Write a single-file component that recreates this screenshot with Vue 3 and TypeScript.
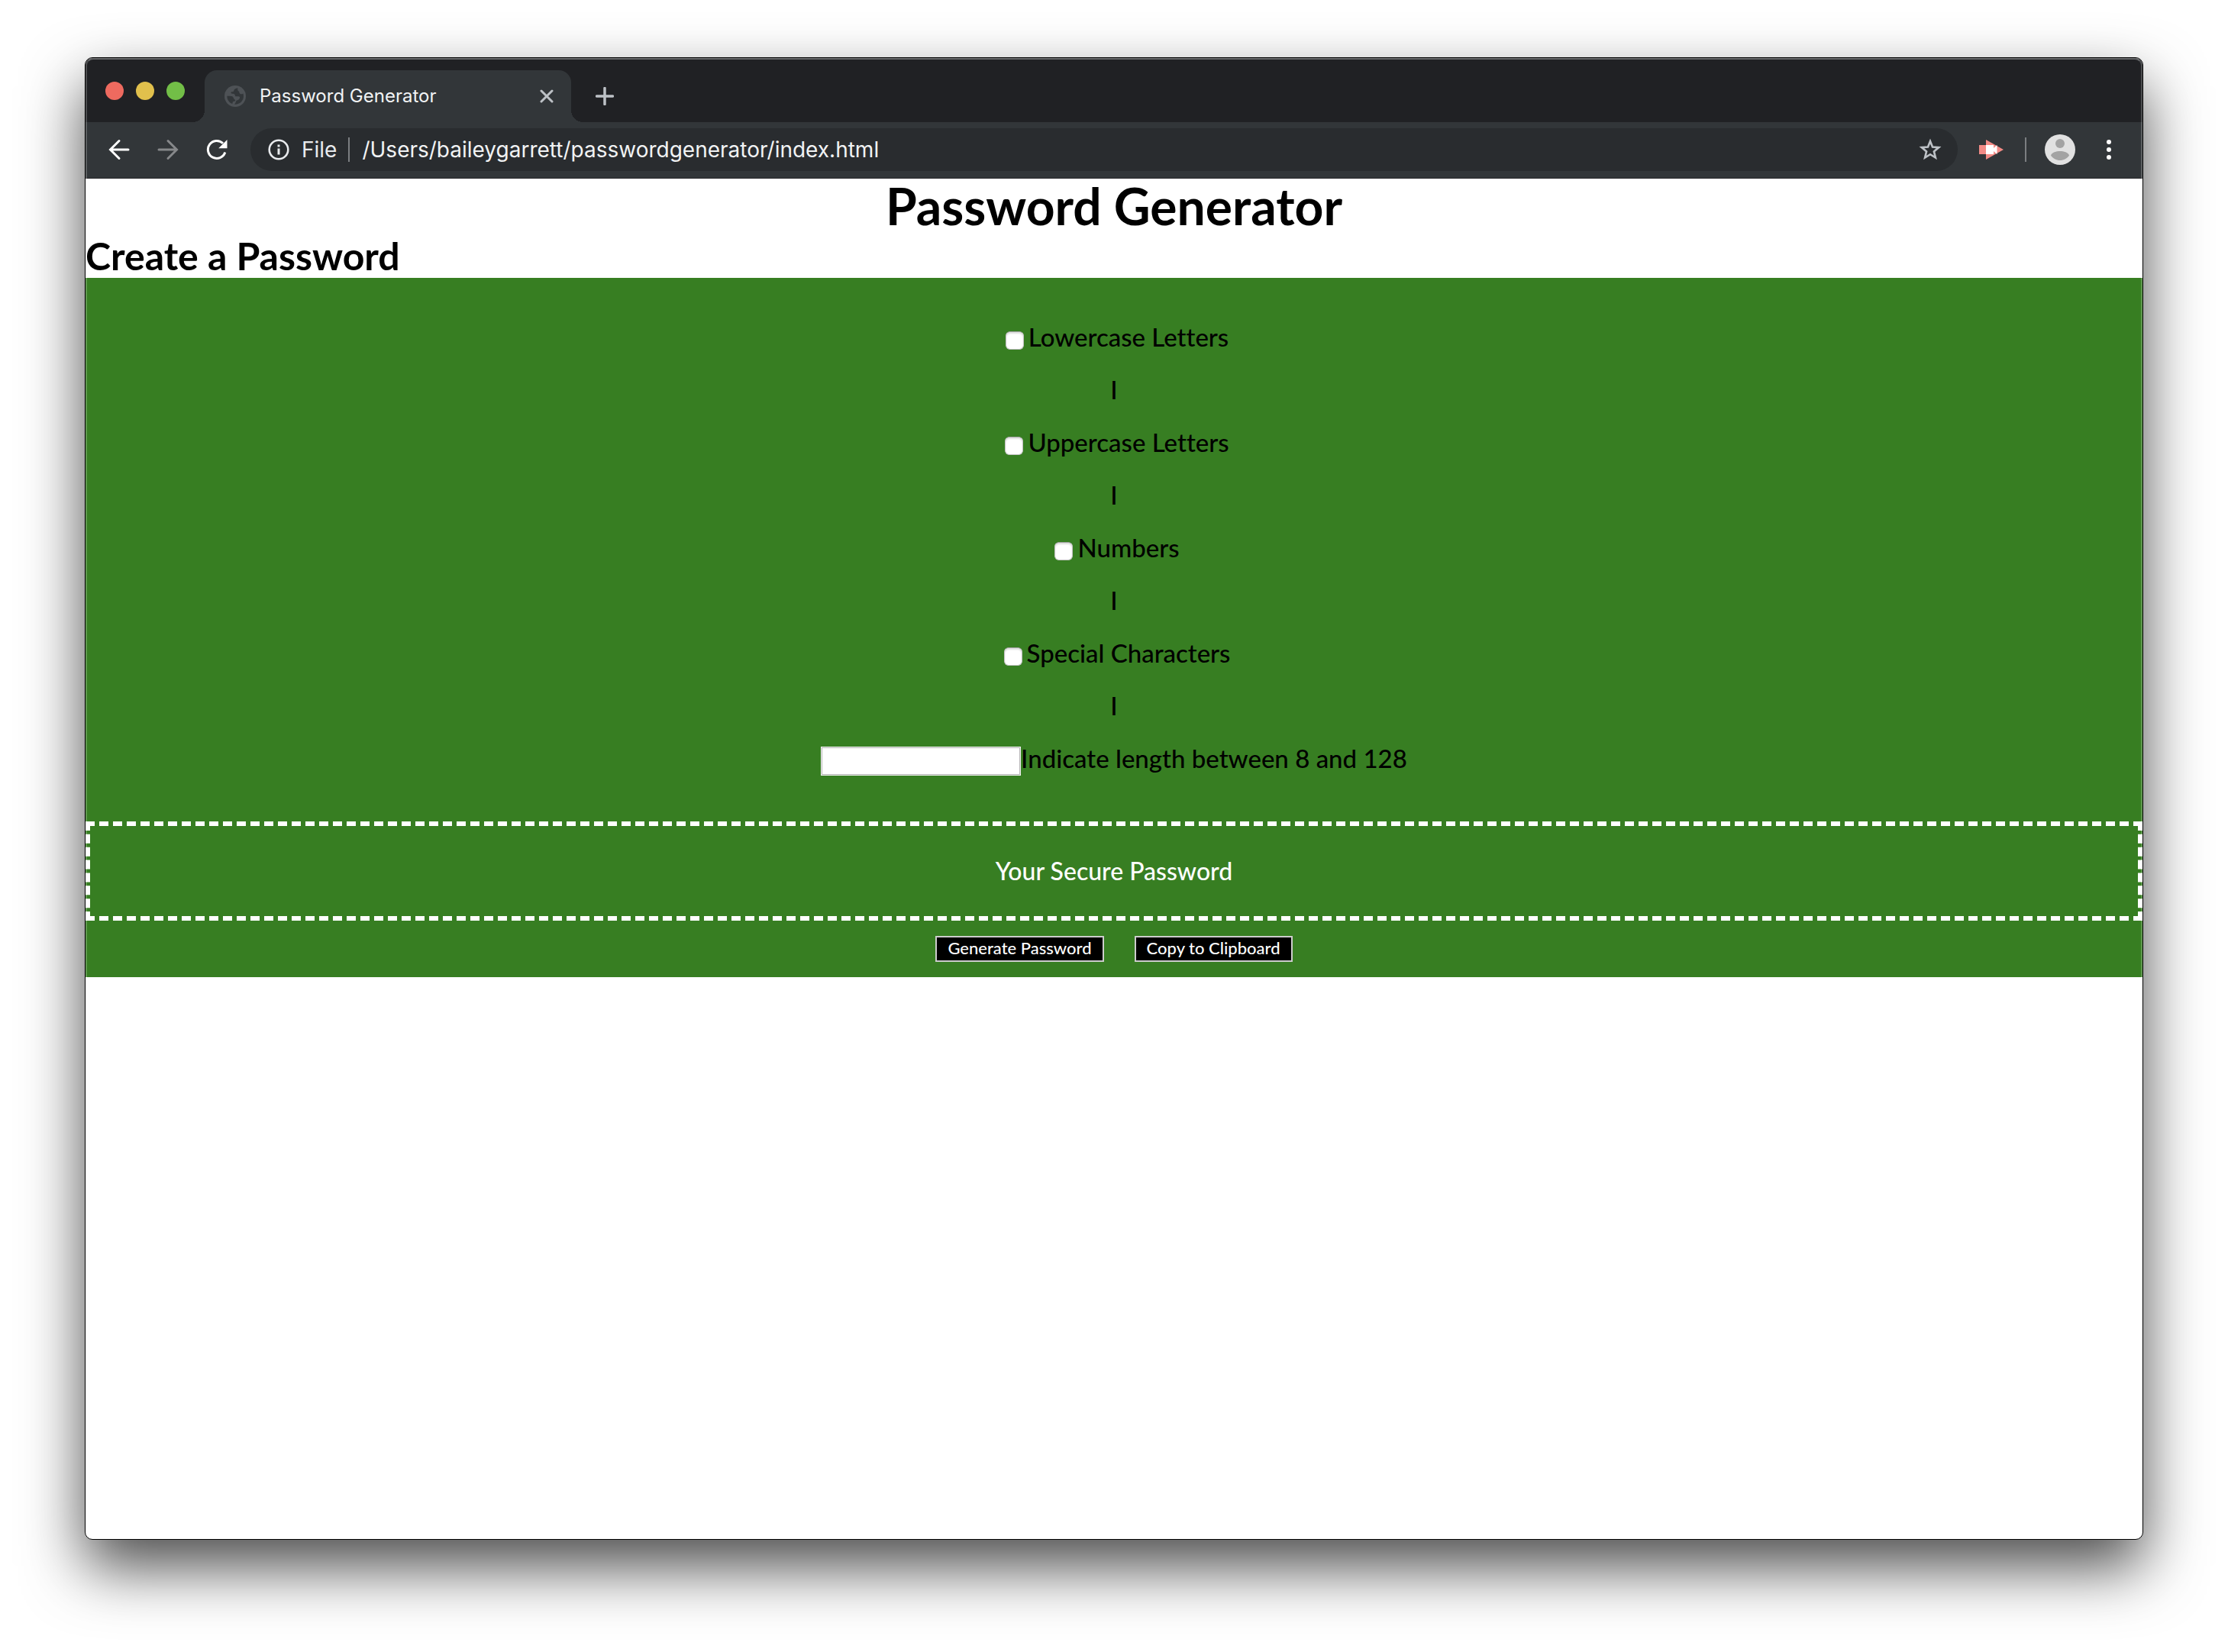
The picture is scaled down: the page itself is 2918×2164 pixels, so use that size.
<script setup lang="ts">
import { reactive, ref } from 'vue'

interface CharacterSet {
  id: string
  label: string
}

const characterSets: CharacterSet[] = [
  { id: 'lowercase', label: 'Lowercase Letters' },
  { id: 'uppercase', label: 'Uppercase Letters' },
  { id: 'numbers', label: 'Numbers' },
  { id: 'special', label: 'Special Characters' },
]

const alphabet: Record<string, string> = {
  lowercase: 'abcdefghijklmnopqrstuvwxyz',
  uppercase: 'ABCDEFGHIJKLMNOPQRSTUVWXYZ',
  numbers: '0123456789',
  special: '!@#$%^&*()-_=+?',
}

const selected = reactive<Record<string, boolean>>({})
const length = ref('')
const password = ref('Your Secure Password')

function generate(): void {
  const pool = characterSets
    .filter((set) => selected[set.id])
    .map((set) => alphabet[set.id])
    .join('')
  const size = Number(length.value)
  if (!pool || size < 8 || size > 128) return
  password.value = Array.from({ length: size }, () => pool[Math.floor(Math.random() * pool.length)]).join('')
}

function copy(): void {
  void navigator.clipboard?.writeText(password.value)
}
</script>

<template>
  <div class="desktop">
    <div class="window">
      <header class="tab-strip">
        <div class="lights">
          <button class="light close" type="button" aria-label="Close window"></button>
          <button class="light minimize" type="button" aria-label="Minimize window"></button>
          <button class="light maximize" type="button" aria-label="Maximize window"></button>
        </div>
        <div class="tab">
          <svg class="globe" viewBox="0 0 28 28" aria-hidden="true">
            <circle cx="14" cy="14" r="14" fill="#4e5256" />
            <path
              d="M17.500 3.200c-.9.400-3 .6-4.300 1.800-1.200 1.100-.6 2.400-1.700 3.100-1 .6-2.700-.1-3 1.200-.3 1.200 1.300 1.400 2.800 1.500 2 .1 2.700 1.700 2.700 3.300 1.700.6 3.700-.4 5.300.5 1.500.9.700 3-.8 4-1.400 1-2.900.6-3.500 2.300-.4 1.300-.9 2.700-2.400 3.700 6.700.7 12.400-4 12.400-10.600 0-1.400-.2-2.500-.6-3.500-1.600 1.300-3.300 1-4.300-.1-1-1.100-.4-2.400-1.500-3-1.100-.5-1.800-1.800-1.100-4.200z"
              fill="#323639"
            />
            <path d="M3.400 13.800c2.400.1 5.600-.3 7.200.8 1.400 1 1.300 3.300 3 4 .9.400.9 1.500-.2 1.800-1.700.4-2.600.4-2.700 1.700 0 .9-.1 1.400-.5 2C6 22.400 3.300 18.600 3.400 13.800z" fill="#323639" />
          </svg>
          <span class="tab-title">Password Generator</span>
          <button class="icon-button tab-close" type="button" aria-label="Close tab">
            <svg viewBox="0 0 18 18" width="18" height="18">
              <path d="M2 2l14 14M16 2L2 16" stroke="#bdc1c6" stroke-width="3" stroke-linecap="round" />
            </svg>
          </button>
        </div>
        <button class="icon-button new-tab" type="button" aria-label="New tab">
          <svg viewBox="0 0 24 24" width="24" height="24">
            <path d="M12 1.500v21M1.500 12h21" stroke="#bdc1c6" stroke-width="3.500" stroke-linecap="round" />
          </svg>
        </button>
      </header>

      <nav class="toolbar" aria-label="Browser toolbar">
        <div class="nav-buttons">
          <button class="icon-button" type="button" aria-label="Back">
            <svg viewBox="0 0 28 28" width="28" height="28" fill="none" stroke="#fff" stroke-width="3" stroke-linecap="round">
              <path d="M26 14H3M14 2.500L2.500 14 14 25.500" />
            </svg>
          </button>
          <button class="icon-button" type="button" aria-label="Forward">
            <svg viewBox="0 0 28 28" width="28" height="28" fill="none" stroke="#86888a" stroke-width="3" stroke-linecap="round">
              <path d="M2 14h23M14 2.500L25.500 14 14 25.500" />
            </svg>
          </button>
          <button class="icon-button" type="button" aria-label="Reload">
            <svg viewBox="0 0 28 28" width="28" height="28">
              <path d="M24.800 17.500A11.500 11.500 0 1 1 22 5.800" fill="none" stroke="#fff" stroke-width="3" />
              <path d="M27.500 1v11.300H16.200z" fill="#fff" />
            </svg>
          </button>
        </div>
        <div class="omnibox">
          <svg viewBox="0 0 28 28" width="28" height="28" aria-hidden="true">
            <circle cx="14" cy="14" r="12.300" fill="none" stroke="#e8eaed" stroke-width="2.600" />
            <path d="M12.500 7.500h3v3h-3zM12.500 12.500h3v8h-3z" fill="#e8eaed" />
          </svg>
          <span class="scheme">File</span>
          <span class="rule"></span>
          <input class="address" type="text" aria-label="Address" value="/Users/baileygarrett/passwordgenerator/index.html" />
          <button class="icon-button" type="button" aria-label="Bookmark this page">
            <svg viewBox="0 0 30 30" width="30" height="30">
              <path
                d="M15 4l3 7.500 8.200.6-6.300 5.300 2 8.100L15 21.200l-6.900 4.300 2-8.100-6.300-5.300 8.200-.6z"
                fill="none"
                stroke="#bdc1c6"
                stroke-width="2.600"
              />
            </svg>
          </button>
        </div>
        <button class="icon-button extension" type="button" aria-label="Screen recorder">
          <svg viewBox="0 0 32 26" width="32" height="26">
            <path d="M0 7h9V0l23 13L9 26v-7H0z" fill="#f28b86" />
            <path d="M9 7h10v4l4.500-4v12L19 15v4H9z" fill="#fff" />
          </svg>
        </button>
        <span class="rule toolbar-rule"></span>
        <button class="icon-button avatar" type="button" aria-label="Profile">
          <svg viewBox="0 0 40 40" width="40" height="40">
            <circle cx="20" cy="20" r="20" fill="#e1e1e1" />
            <circle cx="20" cy="12" r="6" fill="#a3a3a3" />
            <path d="M8 27.500C9.500 23.500 15 22 20 22s10.500 1.500 12 5.500C29.500 31.500 25 34 20 34S10.500 31.500 8 27.500z" fill="#a3a3a3" />
          </svg>
        </button>
        <button class="icon-button" type="button" aria-label="Menu">
          <svg viewBox="0 0 6 28" width="6" height="28" fill="#fff">
            <circle cx="3" cy="4" r="3" />
            <circle cx="3" cy="14" r="3" />
            <circle cx="3" cy="24" r="3" />
          </svg>
        </button>
      </nav>

      <main class="page">
        <h1>Password Generator</h1>
        <h2>Create a Password</h2>
        <section class="generator">
          <div class="options">
            <template v-for="set in characterSets" :key="set.id">
              <label class="option">
                <input v-model="selected[set.id]" class="check" type="checkbox" />
                <span>{{ set.label }}</span>
              </label>
              <div class="option">I</div>
            </template>
            <label class="option">
              <input v-model="length" class="length" type="text" inputmode="numeric" />
              <span>Indicate length between 8 and 128</span>
            </label>
          </div>
          <output class="result">{{ password }}</output>
          <div class="actions">
            <button class="action" type="button" @click="generate">Generate Password</button>
            <button class="action" type="button" @click="copy">Copy to Clipboard</button>
          </div>
        </section>
      </main>
    </div>
  </div>
</template>

<style>
body {
  margin: 0;
  background: #fff;
}
</style>

<style scoped>
* {
  box-sizing: border-box;
}

.desktop {
  display: flex;
  min-height: 100vh;
  padding: 75px 111px 147px;
}

.window {
  position: relative;
  display: flex;
  flex: 1;
  flex-direction: column;
  min-width: 0;
  overflow: hidden;
  border: 1px solid #000;
  border-radius: 10px;
  background: #fff;
  box-shadow: 0 36px 80px rgba(0, 0, 0, 0.7);
}

/* light rim that catches the inner edge of the window */
.window::after {
  position: absolute;
  inset: 0;
  border-top: 2px solid rgba(255, 255, 255, 0.32);
  border-right: 2px solid rgba(255, 255, 255, 0.2);
  border-left: 2px solid rgba(255, 255, 255, 0.2);
  border-radius: 10px;
  content: '';
  pointer-events: none;
}

.tab-strip {
  display: flex;
  align-items: flex-end;
  height: 84px;
  padding-left: 26px;
  background: #202124;
}

.lights {
  display: flex;
  gap: 16px;
  padding-bottom: 29px;
}

.light {
  width: 24px;
  height: 24px;
  padding: 0;
  border: 0;
  border-radius: 50%;
}

.close {
  background: #ee6a5f;
}

.minimize {
  background: #e1c04c;
}

.maximize {
  background: #72be47;
}

.tab {
  position: relative;
  display: flex;
  align-items: center;
  width: 480px;
  height: 68px;
  margin-left: 26px;
  padding: 0 23px 0 26px;
  border-radius: 16px 16px 0 0;
  background: #323639;
}

/* flared feet of the active tab */
.tab::before,
.tab::after {
  position: absolute;
  bottom: 0;
  width: 16px;
  height: 16px;
  content: '';
}

.tab::before {
  right: 100%;
  background: radial-gradient(circle at 0 0, transparent 16px, #323639 16px);
}

.tab::after {
  left: 100%;
  background: radial-gradient(circle at 100% 0, transparent 16px, #323639 16px);
}

.globe {
  width: 28px;
  height: 28px;
}

.tab-title {
  flex: 1;
  margin-left: 18px;
  color: #f1f3f4;
  font: 400 24px/28px Inter, sans-serif;
}

.icon-button {
  display: flex;
  padding: 0;
  border: 0;
  background: none;
}

.new-tab {
  margin: 0 0 22px 32px;
}

.toolbar {
  display: flex;
  align-items: center;
  height: 74px;
  padding: 0 41px 2px 30px;
  border-bottom: 1px solid #26262a;
  background: #323639;
}

.nav-buttons {
  display: flex;
  gap: 36px;
}

.omnibox {
  display: flex;
  flex: 1;
  align-items: center;
  height: 56px;
  margin-left: 30px;
  padding: 0 21px 0 23px;
  border-radius: 28px;
  background: #292c2f;
  font: 400 28px/34px Inter, sans-serif;
}

.scheme {
  margin: 0 15px 0 16px;
  color: #e8eaed;
}

.rule {
  width: 2px;
  height: 32px;
  background: #7b7e81;
}

.address {
  flex: 1;
  min-width: 0;
  margin-left: 16px;
  padding: 0;
  border: 0;
  outline: 0;
  background: none;
  color: #f1f3f4;
  font: inherit;
}

.extension {
  margin-left: 28px;
}

.toolbar-rule {
  margin-left: 28px;
}

.avatar {
  margin: 0 41px 0 24px;
}

.page {
  flex: 1;
  color: #000;
  font-family: Lato, sans-serif;
  font-weight: 500;
  font-variant-ligatures: none;
}

h1,
h2 {
  margin: 0;
  font-weight: 700;
}

h1 {
  font-size: 66px;
  line-height: 72px;
  text-align: center;
}

h2 {
  font-size: 50px;
  line-height: 58px;
}

.generator {
  background: #377e22;
  font-size: 32px;
  line-height: 37px;
}

.options {
  display: flex;
  flex-direction: column;
  align-items: center;
  gap: 32px;
  padding: 59px 0 64px;
  font-size: 33px;
}

.option {
  display: flex;
  align-items: center;
  height: 37px;
}

.check {
  width: 24px;
  height: 24px;
  margin: 8px 6px 0 8px;
  border: 1px solid #c4c4c4;
  border-top-color: #a2a2a2;
  border-radius: 6px;
  appearance: none;
  background: #fff;
  box-shadow: inset 0 2px 2px #dedede;
}

.check:checked {
  background: #3b7ded;
}

.length {
  width: 262px;
  height: 38px;
  margin: 6px 0 0;
  padding: 2px 4px;
  border: 1px solid #f4f4f4;
  outline: 1px solid #b4b4b4;
  outline-offset: -2px;
  background: #fff;
  font: inherit;
}

.result {
  display: block;
  padding: 40px;
  border: 6px dashed #fff;
  color: #fff;
  line-height: 38px;
  text-align: center;
}

.actions {
  display: flex;
  justify-content: center;
  gap: 40px;
  padding: 20px 0;
}

.action {
  height: 34px;
  padding: 0 14px 2px;
  border: 2px solid #ccc;
  border-radius: 0;
  background: #000;
  color: #fff;
  font: inherit;
  font-size: 22px;
  line-height: 26px;
}
</style>
